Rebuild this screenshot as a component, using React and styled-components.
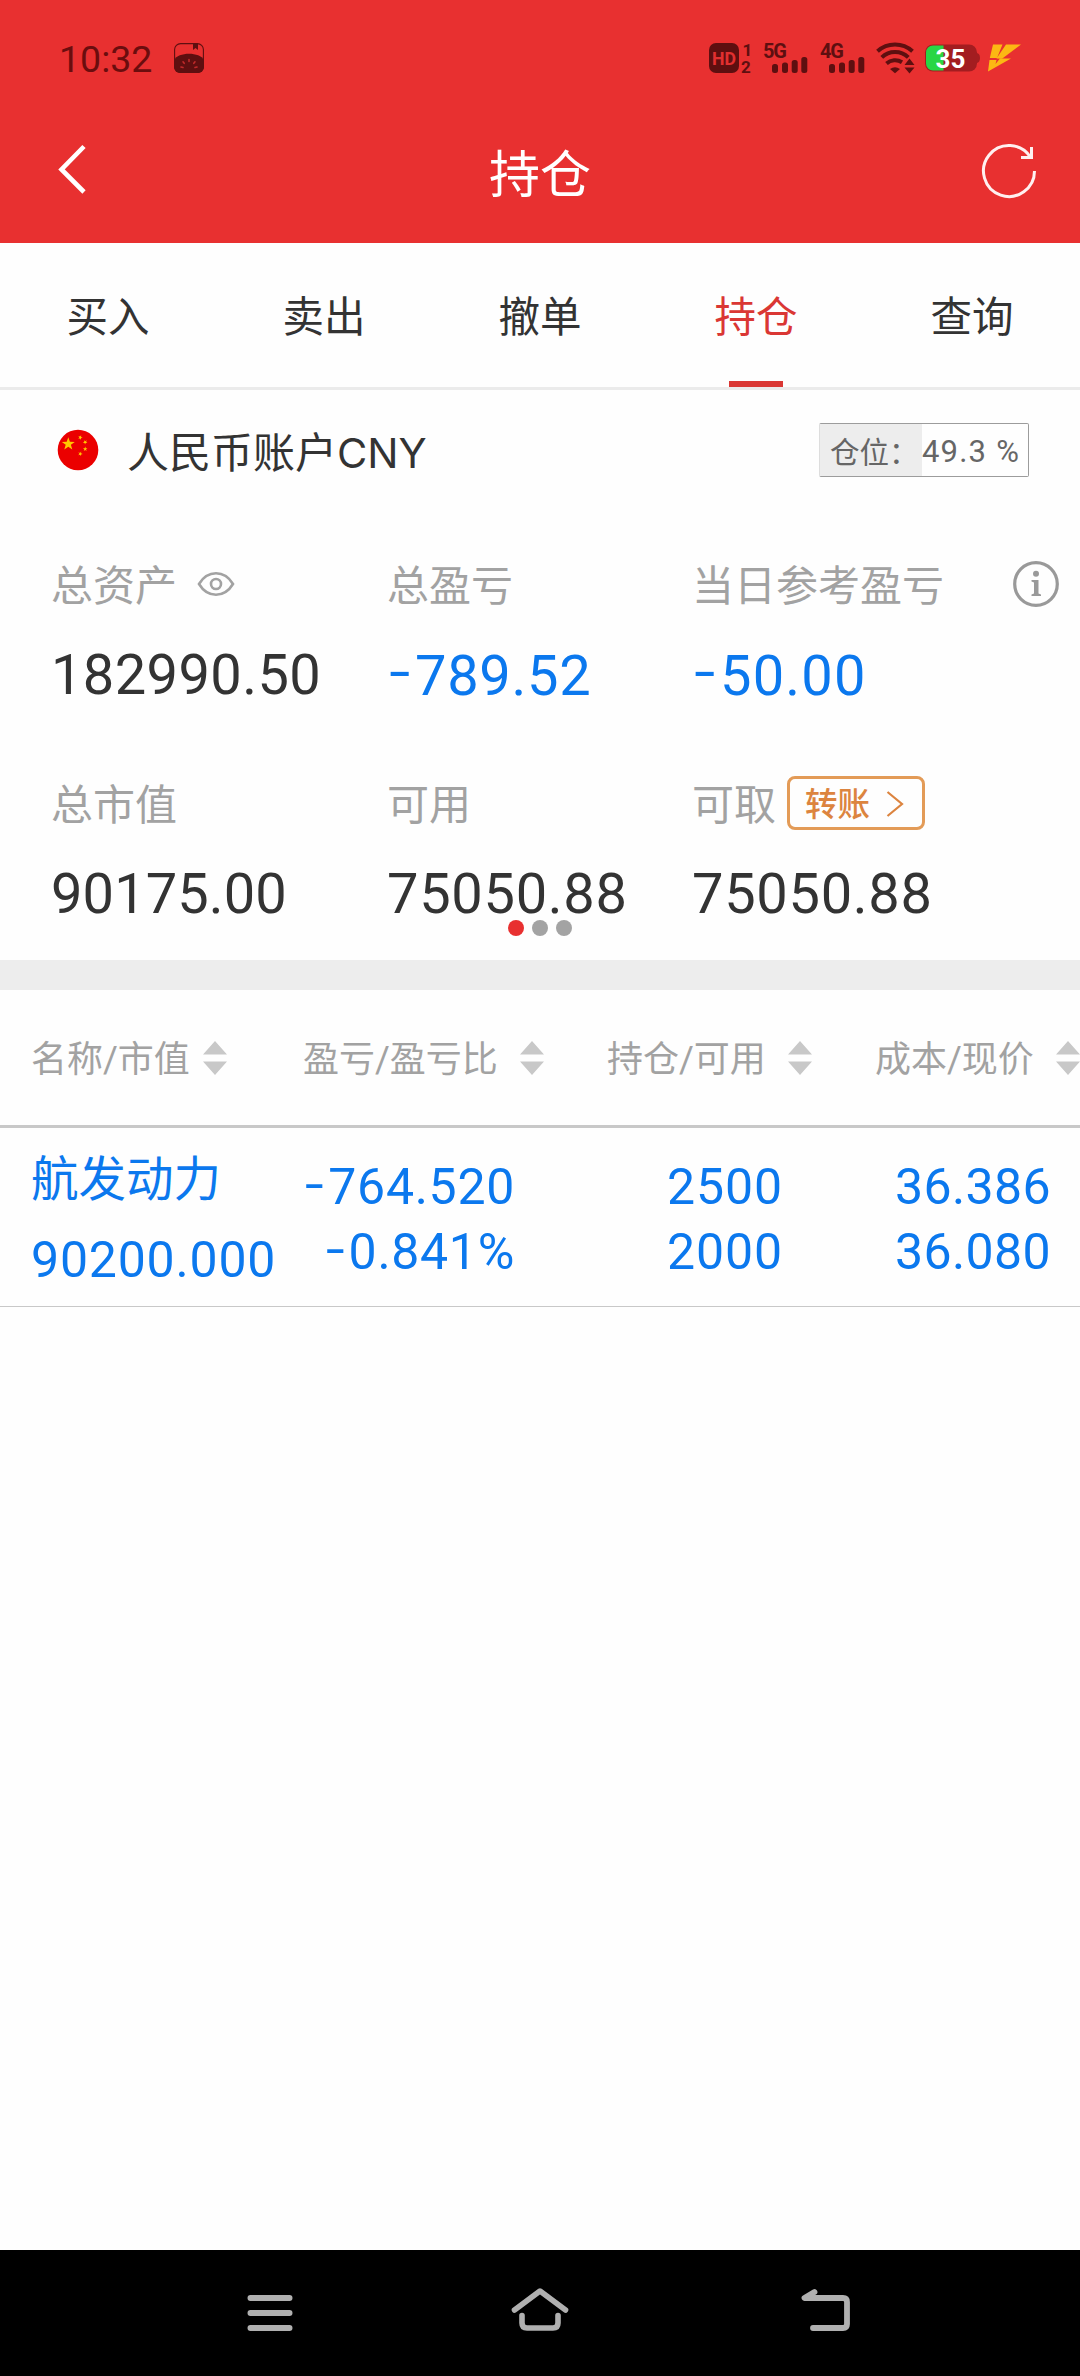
import React from 'react'
import styled, { createGlobalStyle } from 'styled-components'


const GlobalStyle = createGlobalStyle`
    * {
        box-sizing: border-box;
    }
    body {
        margin: 0;
        background: #ffffff;
        font-family: Roboto, 'Noto Sans CJK SC', sans-serif;
        color: #333333;
    }
    svg {
        display: block;
        flex: none;
        overflow: visible;
    }
`;

const Page = styled.div`
    width: 1080px;
    height: 2376px;
    display: flex;
    flex-direction: column;
    overflow: hidden;
    white-space: nowrap;
    background: #fefefe;
`;

/* header */

const Header = styled.header`
    height: 243px;
    background: #e83030;
    color: #ffffff;
`;

const StatusBar = styled.div`
    height: 112px;
    padding: 4px 59px 0 59px;
    display: flex;
    align-items: center;
    color: #5e0f10;
`;

const Clock = styled.span`
    width: 115px;
    padding-top: 1px;
    font-size: 37.5px;
    line-height: 40px;
    color: #6b0d0e;
`;

const StatusIcons = styled.div`
    margin-left: auto;
    display: flex;
    align-items: center;
`;

const StatusItem = styled.span`
    margin-right: ${props => props.$gap || '0'};
`;

const TitleBar = styled.div`
    height: 131px;
    padding: 0 43px 10px 57px;
    display: grid;
    grid-template-columns: 56px 1fr 70px;
    align-items: center;
`;

const Title = styled.h1`
    margin: 0;
    padding-top: 6px;
    font-size: 51px;
    font-weight: 400;
    line-height: 60px;
    text-align: center;
`;

const BackButton = styled.div`
    padding-bottom: 7px;
`;

const RefreshButton = styled.div`
    padding-bottom: 3px;
    justify-self: end;
`;

/* tabs */

const Tabs = styled.nav`
    height: 147px;
    display: grid;
    grid-template-columns: repeat(5, 1fr);
    border-bottom: 3px solid #ebebeb;
`;

const Tab = styled.div`
    display: flex;
    flex-direction: column;
    align-items: center;
    justify-content: space-between;
    padding-top: 50px;
    font-size: 41.5px;
    line-height: 50px;
    color: ${props => props.$active ? '#da3734' : '#333333'};
`;

const TabMark = styled.div`
    width: 54px;
    height: 6px;
    background: #da3734;
`;

/* account */

const AccountRow = styled.div`
    height: 120px;
    padding: 0 51px 0 57px;
    display: flex;
    align-items: center;
`;

const AccountName = styled.div`
    margin-left: 28px;
    padding-top: 6px;
    font-size: 42px;
    line-height: 50px;

    span {
        font-family: Inter, sans-serif;
        font-size: 41.5px;
    }
`;

const Position = styled.div`
    margin-left: auto;
    width: 210px;
    height: 54px;
    display: flex;
    border: 1px solid #9c9c9c;
    border-left-color: #dddddd;
    border-radius: 2px;
    color: #666666;
    font-size: 29.5px;
    line-height: 55px;
`;

const PositionLabel = styled.div`
    width: 102px;
    padding-left: 10px;
    background: #ededed;
    font-family: 'Noto Sans CJK SC', sans-serif;
    line-height: 53px;
`;

const PositionValue = styled.div`
    font-size: 31px;
    letter-spacing: 1.2px;
`;

const Summary = styled.section`
    height: 450px;
    padding-left: 51px;
    display: grid;
    grid-template-columns: 336px 305px auto;
    grid-template-rows: 219px 187px;
    padding-top: 44px;
`;

const Stat = styled.div`
    display: flex;
    flex-direction: column;
`;

const StatLabel = styled.div`
    height: 60px;
    padding-top: 5px;
    display: flex;
    align-items: center;
    font-size: 42px;
    line-height: 55px;
    color: #a2a2a2;
`;

const StatValue = styled.div`
    margin-top: 30px;
    font-size: 56px;
    line-height: 62px;
    letter-spacing: ${props => props.$spacing || '0.7px'};
    color: ${props => props.$down ? '#0b78ee' : '#333333'};
`;

/* the minus sits at mid digit height and keeps a wide cell */
const Minus = styled.span`
    display: inline-block;
    width: 0.5em;
    padding-left: 0.03em;
    line-height: 1;
    text-align: left;
    vertical-align: 0.07em;
    transform: scaleX(1.35);
    transform-origin: left;
`;

const EyeSlot = styled.span`
    margin-left: 20px;
    padding-bottom: 5px;
`;

const InfoSlot = styled.span`
    margin-left: 69px;
    padding-bottom: 5px;
`;

const TransferButton = styled.div`
    width: 138px;
    height: 54px;
    margin: 0 0 5px 11px;
    padding: 4px 18px 0 15px;
    display: flex;
    align-items: center;
    justify-content: space-between;
    border: 3px solid #e39b57;
    border-radius: 8px;
    font-size: 32.5px;
    font-weight: 500;
    line-height: 44px;
    color: #dc843f;
`;

const Pager = styled.div`
    height: 16px;
    margin-top: -40px;
    margin-bottom: 24px;
    display: flex;
    justify-content: center;
    gap: 8px;
`;

const Dot = styled.span`
    width: 16px;
    height: 16px;
    border-radius: 50%;
    background: ${props => props.$active ? '#e83030' : '#a3a3a3'};
`;

const Divider = styled.div`
    height: 30px;
    background: #ededed;
`;

/* positions table */

const TableHead = styled.div`
    height: 138px;
    padding-left: 31px;
    display: grid;
    grid-template-columns: 272px 304px 268px auto;
    align-items: center;
    border-bottom: 3px solid #c8c8c8;
`;

const HeadCell = styled.div`
    width: ${props => props.$width};
    display: flex;
    align-items: center;
    justify-content: space-between;
    font-size: 36px;
    line-height: 50px;
    color: #a2a2a2;

    span {
        padding-top: 5px;
    }
    svg {
        margin-top: 1px;
    }
`;

const TableRow = styled.div`
    height: 179px;
    padding-left: 31px;
    display: grid;
    grid-template-columns: 271px 213px 268px 268px;
    border-bottom: 1px solid #c8c8c8;
    color: #0b78ee;
`;

const NameCell = styled.div`
    display: flex;
    flex-direction: column;
    padding-top: 22px;
    font-size: 50px;
    line-height: 60px;
    letter-spacing: 0.8px;
`;

const StockName = styled.div`
    margin-bottom: 20px;
    font-size: 47.5px;
    letter-spacing: 0;
`;

const ValueCell = styled.div`
    padding-top: 29px;
    display: flex;
    flex-direction: column;
    gap: 5px;
    text-align: right;
    font-size: 50px;
    line-height: 60px;
    letter-spacing: ${props => props.$spacing || '0.4px'};
`;

const Empty = styled.div`
    flex: 1;
`;

const NavBar = styled.footer`
    height: 126px;
    padding-left: 247px;
    display: grid;
    grid-template-columns: 264px 290px auto;
    align-items: center;
    background: #000000;
`;

const NotebookIcon = () => (
    <svg width="30" height="30" viewBox="0 0 30 30">
        <rect x="0.6" y="0.6" width="28.8" height="28.8" rx="6" fill="none" stroke="currentColor" strokeWidth="1.1" />
        <path d="M19 0h5v7l-2.5-2-2.5 2z" fill="currentColor" />
        <path d="M0 17C4 8.500 26 8.500 30 17v7a6 6 0 0 1-6 6H6a6 6 0 0 1-6-6z" fill="currentColor" />
        <g stroke="#c02a2a" strokeWidth="1.6" strokeLinecap="round">
            <path d="M15 16.500v2M9 18.800l1.200 1.500M21 18.800l-1.200 1.500M7 24l2 .5M23 24l-2 .5" />
        </g>
    </svg>
)

const HdIcon = () => (
    <svg width="44" height="32" viewBox="0 0 44 32">
        <rect x="1" y="1" width="30" height="30" rx="7" fill="currentColor" />
        <text x="4" y="23" fontSize="19" fontWeight="700" textLength="24" lengthAdjust="spacingAndGlyphs" fill="#e23030">HD</text>
        <text x="34.500" y="14" fontSize="17" fontWeight="700" fill="currentColor">1</text>
        <text x="33" y="31" fontSize="17" fontWeight="700" fill="currentColor">2</text>
    </svg>
)

const SignalIcon = ({ label }) => (
    <svg width="46" height="32" viewBox="0 0 46 32">
        <text x="0" y="15.500" fontSize="20" fontWeight="700" textLength="24" fill="currentColor">{label}</text>
        <rect x="9" y="22" width="6" height="9" rx="2.500" fill="currentColor" />
        <rect x="19" y="20.500" width="6" height="10.500" rx="2.500" fill="currentColor" />
        <rect x="28.700" y="18" width="6" height="13" rx="2.500" fill="currentColor" />
        <rect x="38.300" y="15" width="6" height="16" rx="2.500" fill="currentColor" />
    </svg>
)

const WifiIcon = () => (
    <svg width="40" height="32" viewBox="0 0 40 32">
        <g fill="none" stroke="currentColor" strokeWidth="4">
            <path d="M2.500 9.200a26 26 0 0 1 35 0" />
            <path d="M6.800 15.400a19 19 0 0 1 26.500 0" />
            <path d="M11.500 21.500a13 13 0 0 1 15.500-1.300" />
        </g>
        <path d="M15 27q5-3.600 10 0l-5 4.300z" fill="currentColor" />
        <path d="M34.500 16.500l5 6.500h-10zM34.500 31.500l5-6h-10z" fill="currentColor" />
    </svg>
)

const BatteryIcon = () => (
    <svg width="55" height="28" viewBox="0 0 55 28">
        <rect x="0" y="0.500" width="52" height="27" rx="8" fill="#a31d20" />
        <path d="M51 9q4 0 4 5t-4 5z" fill="#a31d20" />
        <path d="M18.500 1.500H8a7 7 0 0 0-7 7v11a7 7 0 0 0 7 7h10.500z" fill="#28d644" />
        <text x="10.500" y="23.500" fontSize="26" fontWeight="700" textLength="30" fill="#ffffff">35</text>
    </svg>
)

const BoltIcon = () => (
    <svg width="33" height="28" viewBox="0 0 33 28">
        <path d="M5 0.500h9.500L9 14H1.800zM18 0.500h15L14 14.800 8.500 14.500z" fill="#fcb813" />
        <path d="M1.500 16h7L7.500 20 12 14.500h11L0 27.500z" fill="#fcb813" />
    </svg>
)

const BackIcon = () => (
    <svg width="30" height="50" viewBox="0 0 30 50">
        <path d="M27 2.500L4.500 25.500 27 48" fill="none" stroke="#ffffff" strokeWidth="4.600" />
    </svg>
)

const RefreshIcon = () => (
    <svg width="56" height="56" viewBox="0 0 56 56">
        <path d="M53.500 28A25.500 25.500 0 1 1 49.500 14.300" fill="none" stroke="#fff0f0" strokeWidth="3" />
        <path d="M50.500 4v10.500H40" fill="none" stroke="#fff0f0" strokeWidth="3" />
    </svg>
)

const starPoints = (cx, cy, r, turn = 0) => {
    const points = []
    for (let i = 0; i < 10; i++) {
        const radius = i % 2 ? r * 0.4 : r
        const angle = (i * 36 - 90 + turn) * Math.PI / 180
        points.push(`${cx + radius * Math.cos(angle)},${cy + radius * Math.sin(angle)}`)
    }
    return points.join(' ')
}

const FlagIcon = () => (
    <svg width="42" height="42" viewBox="0 0 42 42">
        <circle cx="21" cy="21" r="20.300" fill="#eb0000" />
        <g fill="#ffc800">
            <polygon points={starPoints(11.3, 15, 6.8)} />
            <polygon points={starPoints(23.3, 8.5, 2.4, 20)} />
            <polygon points={starPoints(28.2, 13.2, 2.4, 40)} />
            <polygon points={starPoints(28.2, 20, 2.4)} />
            <polygon points={starPoints(23.3, 24.8, 2.4, 20)} />
        </g>
    </svg>
)

const EyeIcon = () => (
    <svg width="38" height="26" viewBox="0 0 38 26" fill="none" stroke="#a2a2a2" strokeWidth="2.600">
        <path d="M2 13Q8.500 2.300 19 2.300T36 13Q29.500 23.700 19 23.700T2 13z" />
        <circle cx="19" cy="13" r="5" />
    </svg>
)

const InfoIcon = () => (
    <svg width="46" height="46" viewBox="0 0 46 46">
        <circle cx="23" cy="23" r="21.300" fill="none" stroke="#999999" strokeWidth="3.200" />
        <circle cx="23" cy="12.700" r="3" fill="#999999" />
        <path d="M18.500 19h7v13.500l2.500 1V35h-9.500v-1.500l2.500-1V21.500l-2.500-1z" fill="#999999" />
    </svg>
)

const TransferArrow = () => (
    <svg width="18" height="26" viewBox="0 0 18 26">
        <path d="M1.500 0L16 12 1.500 24" fill="none" stroke="#dc843f" strokeWidth="2.200" />
    </svg>
)

const SortIcon = () => (
    <svg width="24" height="34" viewBox="0 0 24 34">
        <path d="M12 0l12 13.500H0zM12 34l12-13.500H0z" fill="#c8c8c8" />
    </svg>
)

const MenuIcon = () => (
    <svg width="46" height="44" viewBox="0 0 46 44">
        <path d="M3.500 7h39M3.500 22h39M3.500 37h39" stroke="#b0b0b0" strokeWidth="6" strokeLinecap="round" />
    </svg>
)

const HomeIcon = () => (
    <svg width="58" height="44" viewBox="0 0 58 44" fill="none" stroke="#b0b0b0" strokeWidth="5.600" strokeLinecap="round" strokeLinejoin="round">
        <path d="M3.500 19L29 0l25.500 19" />
        <path d="M11 24.500V32q0 5 5 5h26q5 0 5-5v-7.500" />
    </svg>
)

const ReturnIcon = () => (
    <svg width="50" height="44" viewBox="0 0 50 44" fill="none" stroke="#b0b0b0" strokeWidth="5.800" strokeLinecap="round" strokeLinejoin="round">
        <path d="M13.500 1L3.500 7h38.500q4 0 4 4v22q0 4-4 4H12" />
    </svg>
)

// loss figures carry their own minus spacing
const Amount = ({ children }) => (
    children.startsWith('-')
        ? <><Minus>-</Minus>{children.slice(1)}</>
        : <>{children}</>
)

const tabs = ['买入', '卖出', '撤单', '持仓', '查询']

const columns = [
    { label: '名称/市值', width: '196px' },
    { label: '盈亏/盈亏比', width: '241px' },
    { label: '持仓/可用', width: '205px' },
    { label: '成本/现价', width: '205px' },
]

const App = () => (
    <Page>
        <GlobalStyle />
        <Header>
            <StatusBar>
                <Clock>10:32</Clock>
                <NotebookIcon />
                <StatusIcons>
                    <StatusItem $gap="11px"><HdIcon /></StatusItem>
                    <StatusItem $gap="11px"><SignalIcon label="5G" /></StatusItem>
                    <StatusItem $gap="9px"><SignalIcon label="4G" /></StatusItem>
                    <StatusItem $gap="10px"><WifiIcon /></StatusItem>
                    <StatusItem $gap="8px"><BatteryIcon /></StatusItem>
                    <StatusItem><BoltIcon /></StatusItem>
                </StatusIcons>
            </StatusBar>
            <TitleBar>
                <BackButton><BackIcon /></BackButton>
                <Title>持仓</Title>
                <RefreshButton><RefreshIcon /></RefreshButton>
            </TitleBar>
        </Header>

        <Tabs>
            {tabs.map(tab => (
                <Tab key={tab} $active={tab === '持仓'}>
                    {tab}
                    {tab === '持仓' && <TabMark />}
                </Tab>
            ))}
        </Tabs>

        <AccountRow>
            <FlagIcon />
            <AccountName>人民币账户<span>CNY</span></AccountName>
            <Position>
                <PositionLabel>仓位：</PositionLabel>
                <PositionValue>49.3 %</PositionValue>
            </Position>
        </AccountRow>

        <Summary>
            <Stat>
                <StatLabel>总资产<EyeSlot><EyeIcon /></EyeSlot></StatLabel>
                <StatValue $spacing="0.4px">182990.50</StatValue>
            </Stat>
            <Stat>
                <StatLabel>总盈亏</StatLabel>
                <StatValue $down><Amount>-789.52</Amount></StatValue>
            </Stat>
            <Stat>
                <StatLabel>当日参考盈亏<InfoSlot><InfoIcon /></InfoSlot></StatLabel>
                <StatValue $down $spacing="1.2px"><Amount>-50.00</Amount></StatValue>
            </Stat>
            <Stat>
                <StatLabel>总市值</StatLabel>
                <StatValue $spacing="0.1px">90175.00</StatValue>
            </Stat>
            <Stat>
                <StatLabel>可用</StatLabel>
                <StatValue>75050.88</StatValue>
            </Stat>
            <Stat>
                <StatLabel>
                    可取
                    <TransferButton>转账<TransferArrow /></TransferButton>
                </StatLabel>
                <StatValue>75050.88</StatValue>
            </Stat>
        </Summary>
        <Pager>
            <Dot $active />
            <Dot />
            <Dot />
        </Pager>
        <Divider />

        <TableHead>
            {columns.map(column => (
                <HeadCell key={column.label} $width={column.width}>
                    <span>{column.label}</span>
                    <SortIcon />
                </HeadCell>
            ))}
        </TableHead>
        <TableRow>
            <NameCell>
                <StockName>航发动力</StockName>
                <div>90200.000</div>
            </NameCell>
            <ValueCell $spacing="0.7px">
                <div><Amount>-764.520</Amount></div>
                <div><Amount>-0.841%</Amount></div>
            </ValueCell>
            <ValueCell $spacing="0.9px">
                <div>2500</div>
                <div>2000</div>
            </ValueCell>
            <ValueCell>
                <div>36.386</div>
                <div>36.080</div>
            </ValueCell>
        </TableRow>
        <Empty />

        <NavBar>
            <MenuIcon />
            <HomeIcon />
            <ReturnIcon />
        </NavBar>
    </Page>
)

export default App
